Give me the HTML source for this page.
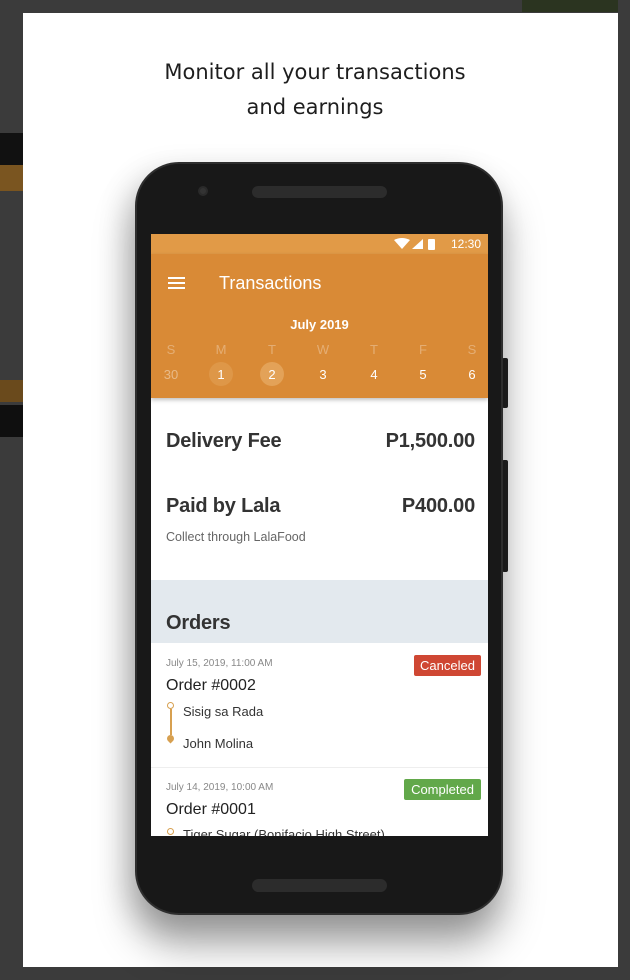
<!DOCTYPE html>
<html><head><style>
*{margin:0;padding:0;box-sizing:border-box}
body{width:630px;height:980px;background:#3b3b3b;position:relative;overflow:hidden;font-family:"Liberation Sans",sans-serif}
.a{position:absolute}
.modal{left:23px;top:13px;width:595px;height:954px;background:#fff}
.t{left:0;width:630px;text-align:center;font-size:21px;color:#1e1e1e;font-family:"DejaVu Sans",sans-serif;font-weight:normal}
.phone{left:135px;top:162px;width:368px;height:753px;background:#181818;border-radius:44px;border:2px solid #2e2e2e;box-shadow:0 30px 40px rgba(0,0,0,.35),-8px 10px 30px rgba(0,0,0,.15)}
.screen{left:151px;top:234px;width:337px;height:602px;background:#fff;overflow:hidden}
.cal{color:#fff;font-size:13px;text-align:center;position:absolute;width:30px}
.big{font-size:20px;color:#333;font-weight:bold;letter-spacing:-0.2px}
</style></head><body>
<div class="a" style="left:522px;top:0;width:96px;height:12px;background:#2b3420"></div>
<div class="a" style="left:0;top:133px;width:23px;height:58px;background:#111"></div>
<div class="a" style="left:0;top:165px;width:23px;height:26px;background:#7a5520"></div>
<div class="a" style="left:0;top:380px;width:23px;height:22px;background:#6a4a1c"></div>
<div class="a" style="left:0;top:405px;width:23px;height:32px;background:#0f0f0f"></div>
<div class="a modal"></div>
<div class="a t" style="top:60px">Monitor all your transactions</div>
<div class="a t" style="top:95px">and earnings</div>
<div class="a" style="left:502px;top:358px;width:6px;height:50px;background:#222;border-radius:2px"></div>
<div class="a" style="left:502px;top:460px;width:6px;height:112px;background:#222;border-radius:2px"></div>
<div class="a phone"></div>
<div class="a" style="left:198px;top:186px;width:10px;height:10px;border-radius:50%;background:#333;border:2px solid #2a2a2a"></div>
<div class="a" style="left:252px;top:186px;width:135px;height:12px;border-radius:6px;background:#2c2c2c"></div>
<div class="a" style="left:252px;top:879px;width:135px;height:13px;border-radius:7px;background:#2c2c2c"></div>
<div class="a screen">
 <div class="a" style="left:0;top:0;width:337px;height:20px;background:#e19a47"></div>
 <div class="a" style="left:0;top:20px;width:337px;height:144px;background:#d98a36;box-shadow:0 2px 4px rgba(0,0,0,.25)"></div>
 <svg class="a" style="left:243px;top:4px" width="52" height="13" viewBox="0 0 52 13"><path d="M0 2 Q8 -2 16 2 L8 11Z" fill="#fff"/><path d="M18 11 L29 1 L29 11Z" fill="#fff"/><rect x="34" y="1" width="7" height="11" rx="1" fill="#fff"/></svg>
 <div class="a" style="left:300px;top:3px;color:#fff;font-size:12px">12:30</div>
 <div class="a" style="left:17px;top:43px;width:17px;height:2px;background:#fff;box-shadow:0 5px 0 #fff,0 10px 0 #fff"></div>
 <div class="a" style="left:68px;top:39px;color:#fff;font-size:18px">Transactions</div>
 <div class="a" style="left:0;top:83px;width:337px;text-align:center;color:#fff;font-size:13px;font-weight:bold">July 2019</div>
 <div class="cal" style="left:5px;top:108px;opacity:.3">S</div><div class="cal" style="left:55px;top:108px;opacity:.3">M</div><div class="cal" style="left:106px;top:108px;opacity:.3">T</div><div class="cal" style="left:157px;top:108px;opacity:.3">W</div><div class="cal" style="left:208px;top:108px;opacity:.3">T</div><div class="cal" style="left:257px;top:108px;opacity:.3">F</div><div class="cal" style="left:306px;top:108px;opacity:.3">S</div>
 <div class="a" style="left:58px;top:128px;width:24px;height:24px;border-radius:50%;background:#de9748"></div>
 <div class="a" style="left:109px;top:128px;width:24px;height:24px;border-radius:50%;background:#e3a258"></div>
 <div class="cal" style="left:5px;top:133px;opacity:.4">30</div><div class="cal" style="left:55px;top:133px">1</div><div class="cal" style="left:106px;top:133px">2</div><div class="cal" style="left:157px;top:133px">3</div><div class="cal" style="left:208px;top:133px">4</div><div class="cal" style="left:257px;top:133px">5</div><div class="cal" style="left:306px;top:133px">6</div>
 <div class="a big" style="left:15px;top:196px">Delivery Fee</div>
 <div class="a big" style="right:13px;top:196px">P1,500.00</div>
 <div class="a big" style="left:15px;top:261px">Paid by Lala</div>
 <div class="a big" style="right:13px;top:261px">P400.00</div>
 <div class="a" style="left:15px;top:296px;font-size:12.5px;color:#666">Collect through LalaFood</div>
 <div class="a" style="left:0;top:346px;width:337px;height:63px;background:#e3e9ee"></div>
 <div class="a big" style="left:15px;top:378px">Orders</div>
 <div class="a" style="left:15px;top:424px;font-size:10px;color:#888">July 15, 2019, 11:00 AM</div>
 <div class="a" style="left:263px;top:421px;width:67px;height:21px;background:#cf4733;color:#fff;font-size:13px;text-align:center;line-height:21px;border-radius:2px">Canceled</div>
 <div class="a" style="left:15px;top:443px;font-size:16px;color:#222">Order #0002</div>
 <div class="a" style="left:16px;top:468px;width:7px;height:7px;border:1.5px solid #d7a050;border-radius:50%"></div>
 <div class="a" style="left:19px;top:475px;width:1.5px;height:26px;background:#d7a050"></div>
 <div class="a" style="left:16px;top:501px;width:7px;height:7px;background:#d7a050;border-radius:50% 50% 50% 0;transform:rotate(-45deg)"></div>
 <div class="a" style="left:32px;top:470px;font-size:13px;color:#333">Sisig sa Rada</div>
 <div class="a" style="left:32px;top:502px;font-size:13px;color:#333">John Molina</div>
 <div class="a" style="left:0;top:533px;width:337px;height:1px;background:#eee"></div>
 <div class="a" style="left:15px;top:548px;font-size:10px;color:#888">July 14, 2019, 10:00 AM</div>
 <div class="a" style="left:253px;top:545px;width:77px;height:21px;background:#62a84a;color:#fff;font-size:13px;text-align:center;line-height:21px;border-radius:2px">Completed</div>
 <div class="a" style="left:15px;top:567px;font-size:16px;color:#222">Order #0001</div>
 <div class="a" style="left:16px;top:594px;width:7px;height:7px;border:1.5px solid #d7a050;border-radius:50%"></div>
 <div class="a" style="left:32px;top:593px;font-size:13px;color:#333">Tiger Sugar (Bonifacio High Street)</div>
</div>
</body></html>
